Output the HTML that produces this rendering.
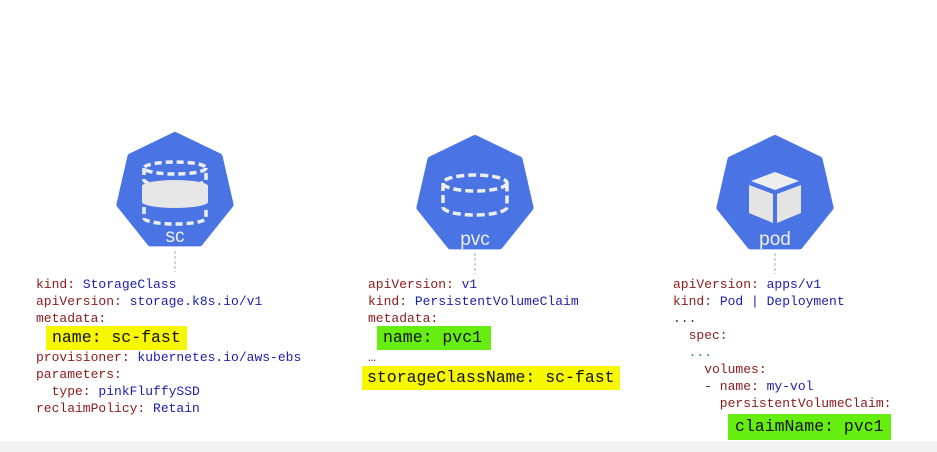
<!DOCTYPE html>
<html><head><meta charset="utf-8"><style>
body{margin:0;width:937px;height:452px;background:#fff;position:relative;overflow:hidden;font-family:"Liberation Mono",monospace;}
.l{position:absolute;font-size:13px;line-height:17px;white-space:pre;color:#8b1a1a;}
.v{color:#1c1cb0;}
.hl{position:absolute;font-size:16.5px;line-height:24px;white-space:pre;color:#111;padding:0 6px;}
.y{background:#f7f700;}
.g{background:#66ee11;}
.bot{position:absolute;left:0;top:441px;width:937px;height:11px;background:#f1f1f1;}
</style></head><body>
<svg width="937" height="452" style="position:absolute;left:0;top:0">
<defs>
<polygon id="hp" points="0,-57 44.6,-35.5 55.6,12.7 24.7,51.4 -24.7,51.4 -55.6,12.7 -44.6,-35.5" fill="#4a74e3" stroke="#4a74e3" stroke-width="6" stroke-linejoin="round"/>
</defs>
<g stroke="#aaa" stroke-dasharray="3,2" stroke-width="1">
<line x1="175" y1="251" x2="175" y2="272"/><line x1="475" y1="253" x2="475" y2="274"/><line x1="775" y1="253" x2="775" y2="274"/>
</g>
<g transform="translate(175,192)"><use href="#hp"/>
<g fill="none" stroke="#eee" stroke-width="3.5" stroke-dasharray="7,4">
<ellipse cx="0" cy="-24" rx="31" ry="6"/>
<path d="M-31,-24 V-12 A31,6 0 0 0 31,-12 V-24"/>
<path d="M-31,15 V26 A31,6 0 0 0 31,26 V15"/>
</g>
<path d="M-33,-6 A33,6 0 0 1 33,-6 V10 A33,6 0 0 1 -33,10 Z" fill="#e6e6e6"/>
<text x="0" y="50" fill="#eee" font-family="Liberation Sans" font-size="19" text-anchor="middle">sc</text>
</g>
<g transform="translate(475,195)"><use href="#hp"/>
<g fill="none" stroke="#eee" stroke-width="3.5" stroke-dasharray="8,4">
<ellipse cx="0" cy="-12" rx="32" ry="8"/>
<path d="M-32,-12 V12 A32,8 0 0 0 32,12 V-12"/>
</g>
<text x="0" y="50" fill="#eee" font-family="Liberation Sans" font-size="19" text-anchor="middle">pvc</text>
</g>
<g transform="translate(775,195)"><use href="#hp"/>
<polygon points="0,-23 24,-14 0,-5 -24,-14" fill="#eee"/>
<polygon points="-26,-10 -2,-1 -2,28 -26,18" fill="#e4e4e4"/>
<polygon points="26,-10 2,-1 2,28 26,18" fill="#e4e4e4"/>
<text x="0" y="50" fill="#eee" font-family="Liberation Sans" font-size="19" text-anchor="middle">pod</text>
</g>
</svg>

<div class="l" style="left:36px;top:276px">kind: <span class="v">StorageClass</span>
apiVersion: <span class="v">storage.k8s.io/v1</span>
metadata:</div>
<div class="hl y" style="left:46px;top:326px">name: sc-fast</div>
<div class="l" style="left:36px;top:349px">provisioner: <span class="v">kubernetes.io/aws-ebs</span>
parameters:
  type: <span class="v">pinkFluffySSD</span>
reclaimPolicy: <span class="v">Retain</span></div>

<div class="l" style="left:368px;top:276px">apiVersion: <span class="v">v1</span>
kind: <span class="v">PersistentVolumeClaim</span>
metadata:</div>
<div class="hl g" style="left:377px;top:326px;padding:0 9px 0 6px">name: pvc1</div>
<div class="l" style="left:368px;top:349px">…</div>
<div class="hl y" style="left:362px;top:366px;padding:0 5px">storageClassName: sc-fast</div>

<div class="l" style="left:673px;top:276px">apiVersion: <span class="v">apps/v1</span>
kind: <span class="v">Pod | Deployment</span>
<span style="color:#333">...</span>
  spec:
  <span style="color:#2a8a6a">...</span>
    volumes:
    - name: <span class="v">my-vol</span>
      persistentVolumeClaim:</div>
<div class="hl g" style="left:728px;top:414px;line-height:26px;padding:0 7px">claimName: pvc1</div>
<div class="bot"></div>
</body></html>
